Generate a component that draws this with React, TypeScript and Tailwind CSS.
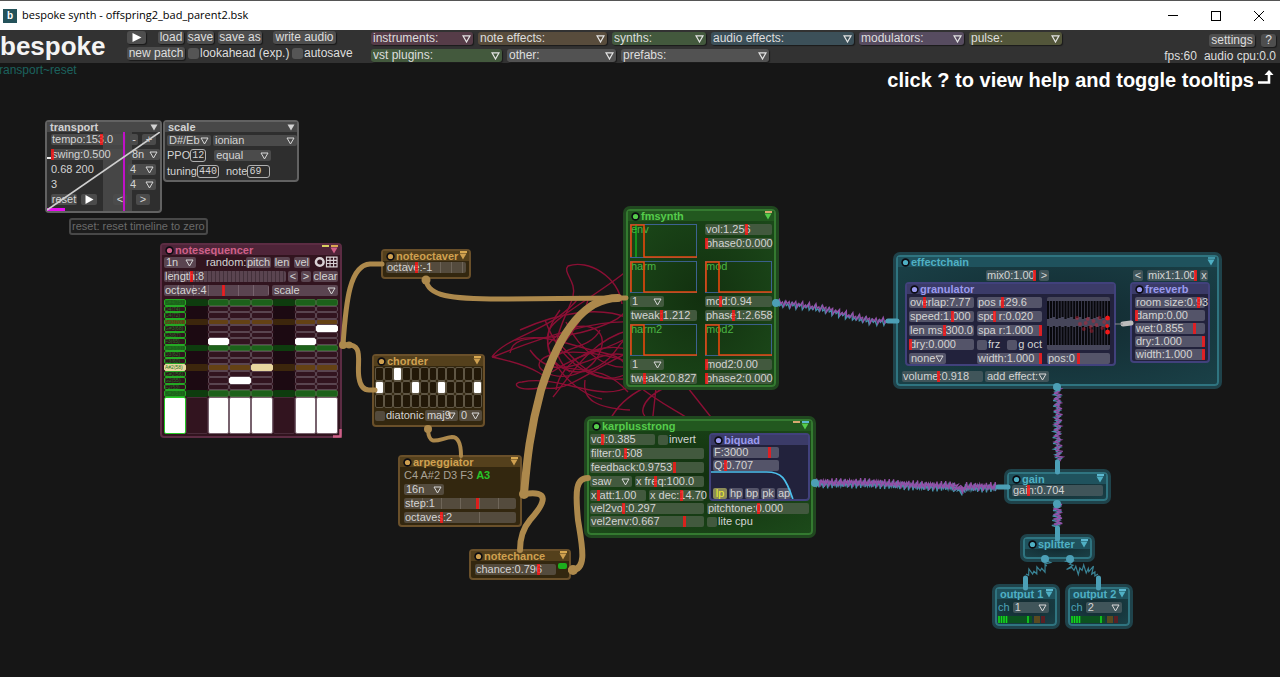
import React, { ReactNode } from "react";
import clsx from "clsx";

type Tone = "grey" | "magenta" | "brown" | "green" | "cyan" | "purple";

const frame: Record<Tone, string> = {
  grey: "border-2 border-[#626262] bg-[#2e2e2e]",
  magenta: "border-2 border-[#5c2c43] bg-[#32141f]",
  brown: "border-2 border-[#6a502a] bg-[#33270f]",
  green: "border-2 border-[#347a30] bg-radial from-[#12300f] to-[#1c4a1a] shadow-[0_0_0_3px_#20481f]",
  cyan: "border-2 border-[#2f7480] bg-radial from-[#12292f] to-[#1a4148] shadow-[0_0_0_3px_#1f434b]",
  purple: "border-2 border-[#41417c] bg-[#22223c]",
};

const bar: Record<Tone, string> = {
  grey: "bg-[#484848] text-[#d2d2d2]",
  magenta: "bg-[#4e2438] text-[#cf6088]",
  brown: "bg-[#54401c] text-[#cfa050]",
  green: "bg-[#22581f] text-[#55cc4b]",
  cyan: "bg-[#1f525d] text-[#4fb0c4]",
  purple: "bg-[#3b3b68] text-[#9a9aee]",
};

const fill: Record<Tone, string> = {
  grey: "bg-[#4b4b4b]",
  magenta: "bg-[#5a4450]",
  brown: "bg-[#544b3d]",
  green: "bg-[#42593e]",
  cyan: "bg-[#40555a]",
  purple: "bg-[#545469]",
};

function Module(props: {
  tone: Tone;
  title: string;
  place: string;
  body: string;
  dot?: boolean;
  menu?: boolean;
  flags?: string[];
  children?: ReactNode;
}) {
  const { tone, title, place, body, dot = true, menu = true, flags = [], children } = props;
  return (
    <section className={clsx("rounded-[4px]", frame[tone], place)}>
      <header className={clsx("flex h-2.5 items-center gap-px pr-0.5 pl-[3px] leading-[11px] font-bold", bar[tone])}>
        {dot && (
          <svg width="9" height="9" viewBox="0 0 9 9" className="shrink-0">
            <circle cx="4.5" cy="4.5" r="4.2" fill="#0c0c12" />
            <circle cx="4.5" cy="4.5" r="2.6" fill="currentColor" />
          </svg>
        )}
        <h2 className="flex-1 whitespace-nowrap">{title}</h2>
        {menu && (
          <span className="relative flex shrink-0">
            <svg width="8" height="7" viewBox="0 0 8 7">
              <path d="M0.5 0.5h7L4 6.5z" fill="currentColor" />
            </svg>
            {flags.length > 0 && (
              <span className="absolute right-0 bottom-full flex gap-0.5">
                {flags.map((f, i) => (
                  <span key={i} className={clsx("h-0.5 w-[7px]", f)} />
                ))}
              </span>
            )}
          </span>
        )}
      </header>
      <div className={clsx("relative", body)}>{children}</div>
    </section>
  );
}

function Slider(props: { tone: Tone; text: string; at?: number; className?: string; marks?: string }) {
  const { tone, text, at = 50, className = "w-full", marks } = props;
  return (
    <label className={clsx("relative block h-[11px] shrink-0 rounded-xs pl-px leading-[11px] whitespace-nowrap", fill[tone], marks, className)}>
      {text}
      <input
        type="range"
        min={0}
        max={100}
        defaultValue={at}
        className="absolute inset-0 h-[11px] w-full appearance-none bg-transparent [&::-webkit-slider-thumb]:h-[11px] [&::-webkit-slider-thumb]:w-[3px] [&::-webkit-slider-thumb]:appearance-none [&::-webkit-slider-thumb]:bg-[#ff1414]/80"
      />
    </label>
  );
}

function Pick(props: { tone: Tone; text: string; name: string; className: string }) {
  return (
    <span className={clsx("relative flex h-[11px] shrink-0 rounded-xs", fill[props.tone], props.className)}>
      <select aria-label={props.name} className="h-full w-full appearance-none pl-0.5 leading-[11px] outline-none">
        <option>{props.text}</option>
      </select>
      <svg width="9" height="8" viewBox="0 0 9 8" className="pointer-events-none absolute top-0.5 right-0.5">
        <path d="M1 1h7L4.5 7z" fill="none" stroke="#d8d8d8" />
      </svg>
    </span>
  );
}

function Key(props: { tone: Tone; children: ReactNode; className?: string; name?: string; active?: boolean }) {
  return (
    <button
      aria-label={props.name}
      aria-pressed={props.active}
      className={clsx(
        "flex h-[11px] shrink-0 items-center justify-center rounded-xs leading-[11px] whitespace-nowrap",
        props.active ? "bg-[#8c8c58] text-[#ecec30]" : fill[props.tone],
        props.className,
      )}
    >
      {props.children}
    </button>
  );
}

function Tick(props: { tone: Tone; children: ReactNode; className?: string }) {
  return (
    <label className={clsx("flex h-[11px] shrink-0 items-center gap-px leading-[11px] whitespace-nowrap", props.className)}>
      <input type="checkbox" className={clsx("size-2.5 appearance-none rounded-xs", fill[props.tone])} />
      {props.children}
    </label>
  );
}

function NumberBox(props: { label: string; value: string; className: string }) {
  return (
    <label className="flex items-center">
      {props.label}
      <input
        defaultValue={props.value}
        className={clsx("h-[13px] rounded-[3px] border border-[#b0b0b0] bg-transparent px-px font-['Liberation_Mono',monospace] text-[10px] leading-[11px]", props.className)}
      />
    </label>
  );
}

function Envelope({ label, playhead, className = "h-8" }: { label: string; playhead?: boolean; className?: string }) {
  return (
    <div className={clsx("relative", className)}>
      <span className="block pl-px leading-[11px] text-[#4cb443]">{label}</span>
      <svg viewBox="0 0 67 34" preserveAspectRatio="none" className="absolute inset-0 h-full w-full">
        <rect x="0.5" y="0.5" width="66" height="33" fill="none" stroke="#3d6292" />
        <path d="M1 33V1h13v32h53" fill="none" stroke="#e8480c" strokeWidth="1.6" />
        {playhead && <path d="M6 1v32" stroke="#10e020" />}
      </svg>
    </div>
  );
}

const barTone = {
  instruments: "bg-[#563c48]",
  notes: "bg-[#584c3c]",
  synths: "bg-[#43593d]",
  audio: "bg-[#3c5059]",
  mods: "bg-[#574c60]",
  pulse: "bg-[#53563a]",
  plain: "bg-[#525252]",
};

function MenuPick({ text, tone, className }: { text: string; tone: keyof typeof barTone; className: string }) {
  return (
    <span className={clsx("relative flex h-[13px] rounded-[3px] shadow-[1px_1px_1px_#1a1a1a]", barTone[tone], className)}>
      <select aria-label={text} className="h-full w-full appearance-none pl-0.5 leading-[13px] outline-none">
        <option>{text}</option>
      </select>
      <svg width="9" height="8" viewBox="0 0 9 8" className="pointer-events-none absolute top-[3px] right-0.5">
        <path d="M1 0.8h7L4.5 7z" fill="none" stroke="#e4e4e4" strokeWidth="1.2" />
      </svg>
    </span>
  );
}

function TopButton({ children, className, name }: { children: ReactNode; className?: string; name?: string }) {
  return (
    <button
      aria-label={name}
      className={clsx("flex h-[13px] items-center justify-center rounded-[3px] bg-[#4e4e4e] leading-[13px] whitespace-nowrap shadow-[1px_1px_1px_#1a1a1a]", className)}
    >
      {children}
    </button>
  );
}

function TopBar() {
  return (
    <header className="flex h-[33px] shrink-0 items-start bg-[#323232] text-xs text-[#dedede]">
      <h1 className="w-[127px] text-[26px] leading-[32px] font-bold text-[#f4f4f4]">bespoke</h1>
      <div className="flex w-[244px] flex-col gap-[3px] pt-px">
        <div className="flex">
          <TopButton name="play" className="mr-3 w-[19px]">
            <svg width="10" height="9" viewBox="0 0 10 9"><path d="M0.5 0v9L9.5 4.5z" fill="#fff" /></svg>
          </TopButton>
          <TopButton className="mr-[3px] w-[26px]">load</TopButton>
          <TopButton className="mr-1 w-[27px]">save</TopButton>
          <TopButton className="mr-[11px] w-11">save as</TopButton>
          <TopButton className="w-[63px]">write audio</TopButton>
        </div>
        <div className="flex leading-[13px] whitespace-nowrap">
          <TopButton className="mr-[3px] w-[58px]">new patch</TopButton>
          <label className="flex w-[104px] items-center gap-px">
            <input type="checkbox" className="size-[11px] shrink-0 appearance-none rounded-[3px] bg-[#555]" />
            lookahead (exp.)
          </label>
          <label className="flex items-center gap-px">
            <input type="checkbox" className="size-[11px] shrink-0 appearance-none rounded-[3px] bg-[#555]" />
            autosave
          </label>
        </div>
      </div>
      <div className="flex flex-col gap-1 pt-0.5">
        <div className="flex gap-[5px]">
          <MenuPick text="instruments:" tone="instruments" className="w-[102px]" />
          <MenuPick text="note effects:" tone="notes" className="w-[129px]" />
          <MenuPick text="synths:" tone="synths" className="w-[94px]" />
          <MenuPick text="audio effects:" tone="audio" className="w-[143px]" />
          <MenuPick text="modulators:" tone="mods" className="w-[105px]" />
          <MenuPick text="pulse:" tone="pulse" className="w-[93px]" />
        </div>
        <div className="flex gap-[5px]">
          <MenuPick text="vst plugins:" tone="synths" className="w-[131px]" />
          <MenuPick text="other:" tone="plain" className="w-[109px]" />
          <MenuPick text="prefabs:" tone="plain" className="w-[148px]" />
        </div>
      </div>
      <div className="ml-auto flex flex-col items-end gap-0.5 pt-1 pr-1">
        <div className="flex gap-1.5">
          <TopButton className="w-[46px]">settings</TopButton>
          <TopButton className="w-[15px]">?</TopButton>
        </div>
        <div className="flex gap-[7px] leading-[14px] whitespace-nowrap">
          <span>fps:60</span>
          <span>audio cpu:0.0</span>
        </div>
      </div>
    </header>
  );
}

function WindowBar() {
  return (
    <div className="flex h-[30px] shrink-0 items-center border-t border-[#555] bg-white text-black">
      <div className="ml-[3px] flex size-3.5 items-center justify-center bg-[#24525a] text-[10px] leading-none font-bold text-white">b</div>
      <span className="ml-[5px] flex-1 font-['Open_Sans',sans-serif] text-[11px]">bespoke synth - offspring2_bad_parent2.bsk</span>
      <button aria-label="minimize" className="flex w-[42px] justify-center">
        <svg width="10" height="10" viewBox="0 0 10 10"><path d="M0 4.5h10" stroke="#000" /></svg>
      </button>
      <button aria-label="maximize" className="flex w-[43px] justify-center">
        <svg width="10" height="10" viewBox="0 0 10 10"><rect x="0.5" y="0.5" width="9" height="9" fill="none" stroke="#000" /></svg>
      </button>
      <button aria-label="close" className="flex w-[43px] justify-center">
        <svg width="10" height="10" viewBox="0 0 10 10"><path d="M0 0l10 10M10 0L0 10" stroke="#000" /></svg>
      </button>
    </div>
  );
}

function Transport() {
  return (
    <Module tone="grey" title="transport" dot={false} place="absolute left-[45px] top-[57px] w-[117px]" body="flex flex-col gap-1 px-1 pt-0.5 pb-1.5">
      <svg viewBox="0 0 113 79" className="pointer-events-none absolute inset-0 h-full w-full" preserveAspectRatio="none">
        <rect x="56" width="29" height="79" fill="#464646" />
      </svg>
      <div className="relative flex items-center gap-1">
        <Slider tone="grey" text="tempo:153.0" at={68} className="w-[75px]" />
        <Key tone="grey" className="w-2">-</Key>
        <Key tone="grey" className="w-3.5">+</Key>
      </div>
      <div className="relative flex items-center gap-1">
        <Slider tone="grey" text="swing:0.500" at={0} className="w-[75px]" />
        <Pick tone="grey" name="swing interval" text="8n" className="w-[30px]" />
      </div>
      <div className="relative flex items-center justify-between leading-[11px]">
        <span>0.68 200</span>
        <Pick tone="grey" name="time signature top" text="4" className="w-7" />
      </div>
      <div className="relative flex items-center justify-between leading-[11px]">
        <span>3</span>
        <Pick tone="grey" name="time signature bottom" text="4" className="w-7" />
      </div>
      <div className="relative flex items-center">
        <Key tone="grey" className="mr-1 w-[26px]">reset</Key>
        <Key tone="grey" name="play" className="mr-4 w-4">
          <svg width="9" height="9" viewBox="0 0 9 9"><path d="M0.5 0v9L8.5 4.5z" fill="#fff" /></svg>
        </Key>
        <Key tone="grey" className="mr-[9px] w-3.5">&lt;</Key>
        <Key tone="grey" className="w-3.5">&gt;</Key>
      </div>
      <svg viewBox="0 0 113 79" className="pointer-events-none absolute inset-0 h-full w-full" preserveAspectRatio="none">
        <path d="M77 0v79" stroke="#c010c8" strokeWidth="2" />
        <rect y="76" width="18" height="3" fill="#e80cf0" />
        <path d="M0 78L113 0" stroke="#cfcfcf" strokeWidth="1.6" />
        <path d="M0 26h4" stroke="#eee" strokeWidth="2" />
      </svg>
    </Module>
  );
}

function Scale() {
  return (
    <Module tone="grey" title="scale" dot={false} place="absolute left-[163px] top-[57px] w-[136px]" body="flex flex-col gap-[3px] px-0.5 pt-[3px] pb-0.5">
      <div className="flex gap-0.5">
        <Pick tone="grey" name="root" text="D#/Eb" className="w-[44px]" />
        <Pick tone="grey" name="scale" text="ionian" className="w-[84px]" />
      </div>
      <div className="flex h-[13px] items-center gap-2">
        <NumberBox label="PPO" value="12" className="w-4" />
        <Pick tone="grey" name="intonation" text="equal" className="w-[57px]" />
      </div>
      <div className="flex h-[13px] items-center gap-[7px]">
        <NumberBox label="tuning" value="440" className="w-[22px]" />
        <NumberBox label="note" value="69" className="w-[23px]" />
      </div>
    </Module>
  );
}

const pitches = ["D#4(75)", "D4(74)", "C4(72)", "A#3(70)", "G#3(68)", "G3(67)", "F3(65)", "D#3(63)", "D3(62)", "C3(60)", "A#2(58)", "G#2(56)", "G2(55)", "F2(53)", "D#2(51)"];
const litNotes = ["4-7", "6-2", "6-6", "12-3"];
const paleNotes = ["10-0", "10-4"];
const restSteps = [1, 5];

function noteColor(row: number, col: number) {
  const key = `${row}-${col}`;
  if (litNotes.includes(key)) return "bg-white border-white";
  if (paleNotes.includes(key)) return "bg-[#e8d6a0] border-[#e8d6a0]";
  const rest = restSteps.includes(col);
  const edge = col === 0 ? "border-[#24a824]" : rest ? "border-transparent" : row % 7 === 0 ? "border-[#3a6a34]" : "border-[#5a4550]";
  if (row % 7 === 0) return clsx(rest ? "bg-[#0e3c0e]" : "bg-[#1c611a]", edge);
  if (row % 7 === 3) return clsx(rest ? "bg-[#3c260c]" : "bg-[#644114]", edge);
  return clsx(rest ? "bg-[#1c0a12]" : "bg-[#32141f]", edge);
}

function NoteSequencer() {
  return (
    <Module tone="magenta" title="notesequencer" flags={["bg-[#d8d060]", "bg-[#d8a850]"]} place="absolute left-[160px] top-[180px] w-[182px]" body="px-0.5 pb-0.5">
      <div className="flex h-3.5 items-center">
        <Pick tone="magenta" name="interval" text="1n" className="mr-2.5 w-8" />
        <span className="w-[40px]">random:</span>
        <Key tone="magenta" className="mr-[3px] w-[25px]">pitch</Key>
        <Key tone="magenta" className="mr-1 w-4">len</Key>
        <Key tone="magenta" className="mr-1 w-4">vel</Key>
        <svg width="25" height="12" viewBox="0 0 25 12">
          <circle cx="6" cy="6" r="4" fill="none" stroke="#d8d0d4" strokeWidth="2.6" />
          <path d="M13 1h11v10H13zM13 4.3h11M13 7.6h11M16.7 1v10M20.4 1v10" fill="none" stroke="#d8d0d4" strokeWidth="1.2" />
        </svg>
      </div>
      <div className="flex h-3.5 items-center">
        <Slider tone="magenta" text="length:8" at={22} className="mr-0.5 w-[122px]" marks="bg-[repeating-linear-gradient(90deg,transparent_0_3px,#43303a_3px_4px)]" />
        <Key tone="magenta" className="mr-[3px] w-2.5">&lt;</Key>
        <Key tone="magenta" className="mr-0.5 w-2.5">&gt;</Key>
        <Key tone="magenta" className="w-[25px]">clear</Key>
      </div>
      <div className="flex h-3.5 items-center gap-[3px]">
        <Slider tone="magenta" text="octave:4" at={57} className="w-[105px]" marks="bg-[repeating-linear-gradient(90deg,transparent_0_14px,#77626d_14px_15px)]" />
        <Pick tone="magenta" name="note mode" text="scale" className="w-[66px]" />
      </div>
      <div className="mt-0.5 grid h-[98px] grid-cols-8 grid-rows-15">
        {pitches.map((p, row) =>
          Array.from({ length: 8 }, (_, col) => (
            <div key={`${row}-${col}`} className={clsx("overflow-hidden rounded-xs border text-[5px] leading-[5px] text-[#1f7a1f]", noteColor(row, col))}>
              {col === 0 && p}
            </div>
          )),
        )}
      </div>
      <div className="grid h-[37px] grid-cols-8">
        {Array.from({ length: 8 }, (_, col) => (
          <div
            key={col}
            className={clsx("rounded-xs border", restSteps.includes(col) ? "border-[#4a2c3a] bg-[#32141f]" : col === 0 ? "border-[#24c824] bg-white" : "border-[#77626d] bg-white")}
          />
        ))}
      </div>
      <svg width="9" height="9" viewBox="0 0 9 9" className="absolute -right-0.5 -bottom-0.5">
        <path d="M7.5 0v7.5H0" fill="none" stroke="#cf6088" strokeWidth="2.4" />
      </svg>
    </Module>
  );
}

function Chorder() {
  const on = ["0-2", "1-0", "1-4", "1-7", "1-11"];
  return (
    <Module tone="brown" title="chorder" flags={["bg-[#d8a850]"]} place="absolute left-[372px] top-[291px] w-[113px]" body="px-px pt-px pb-1">
      <div className="grid h-[41px] w-[107px] grid-cols-12 grid-rows-3">
        {[0, 1, 2].map((r) =>
          Array.from({ length: 12 }, (_, c) => (
            <div key={`${r}-${c}`} className={clsx("rounded-xs border border-[#5f5644]", on.includes(`${r}-${c}`) ? "bg-white" : "bg-[#221808]")} />
          )),
        )}
      </div>
      <div className="mt-0.5 flex justify-between">
        <Tick tone="brown">diatonic</Tick>
        <Pick tone="brown" name="chord" text="maj9" className="w-[33px]" />
        <Pick tone="brown" name="inversion" text="0" className="w-[23px]" />
      </div>
    </Module>
  );
}

function FmSynth() {
  return (
    <Module tone="green" title="fmsynth" flags={["bg-[#d8a870]"]} place="absolute left-[626px] top-[146px] w-[150px]" body="grid grid-cols-2 gap-x-2 px-0.5 pt-[3px] pb-px">
      <Envelope label="env" playhead className="h-[34px]" />
      <div className="flex flex-col gap-[3px]">
        <Slider tone="green" text="vol:1.256" at={63} />
        <Slider tone="green" text="phase0:0.000" at={0} />
      </div>
      <div className="flex flex-col gap-[3px] pt-[3px]">
        <Envelope label="harm" />
        <Pick tone="green" name="harmonic ratio" text="1" className="w-[34px]" />
        <Slider tone="green" text="tweak:1.212" at={47} />
      </div>
      <div className="flex flex-col gap-[3px] pt-[3px]">
        <Envelope label="mod" />
        <Slider tone="green" text="mod:0.94" at={22} />
        <Slider tone="green" text="phase1:2.658" at={42} />
      </div>
      <div className="flex flex-col gap-[3px] pt-[3px]">
        <Envelope label="harm2" />
        <Pick tone="green" name="second harmonic ratio" text="1" className="w-[34px]" />
        <Slider tone="green" text="tweak2:0.827" at={21} />
      </div>
      <div className="flex flex-col gap-[3px] pt-[3px]">
        <Envelope label="mod2" />
        <Slider tone="green" text="mod2:0.00" at={0} />
        <Slider tone="green" text="phase2:0.000" at={0} />
      </div>
    </Module>
  );
}

function Karplus() {
  return (
    <Module tone="green" title="karplusstrong" flags={["bg-[#d8a870]", "bg-[#5cb8d0]"]} place="absolute left-[587px] top-[356px] w-[226px]" body="px-px pt-0.5 pb-1.5">
      <div className="flex items-start justify-between">
        <div className="flex w-[114px] flex-col gap-[3px] pt-px">
          <div className="flex gap-[3px]">
            <Slider tone="green" text="vol:0.385" at={18} className="w-[65px]" />
            <Tick tone="green">invert</Tick>
          </div>
          <Slider tone="green" text="filter:0.508" at={31} />
          <Slider tone="green" text="feedback:0.9753" at={75} />
          <div className="flex justify-between">
            <Pick tone="green" name="source" text="saw" className="w-[42px]" />
            <Slider tone="green" text="x freq:100.0" at={29} className="w-[69px]" />
          </div>
          <div className="flex justify-between">
            <Slider tone="green" text="x att:1.00" at={14} className="w-14" />
            <Slider tone="green" text="x dec:14.70" at={60} className="w-[55px]" />
          </div>
        </div>
        <Module tone="purple" title="biquad" menu={false} place="w-[101px]" body="h-[54px] px-0.5 pt-0.5">
          <div className="flex flex-col gap-0.5">
            <Slider tone="purple" text="F:3000" at={87} className="w-[66px]" />
            <Slider tone="purple" text="Q:0.707" at={18} className="w-[66px]" />
          </div>
          <div className="mt-[17px] flex gap-0.5">
            <Key tone="purple" active className="w-3.5">lp</Key>
            <Key tone="purple" className="w-3.5">hp</Key>
            <Key tone="purple" className="w-3.5">bp</Key>
            <Key tone="purple" className="w-3.5">pk</Key>
            <Key tone="purple" className="w-3.5">ap</Key>
          </div>
          <svg viewBox="0 0 96 54" preserveAspectRatio="none" className="pointer-events-none absolute inset-0 h-full w-full">
            <path d="M0 27h55C70 27 74 33 81 54" fill="none" stroke="#4cc0ec" strokeWidth="1.7" />
          </svg>
        </Module>
      </div>
      <div className="mt-0.5 grid grid-cols-[114px_102px] gap-x-[3px] gap-y-0.5">
        <Slider tone="green" text="vel2vol:0.297" at={29} />
        <Slider tone="green" text="pitchtone:0.000" at={50} />
        <Slider tone="green" text="vel2env:0.667" at={84} />
        <Tick tone="green">lite cpu</Tick>
      </div>
    </Module>
  );
}

function EffectChain() {
  return (
    <Module tone="cyan" title="effectchain" flags={["bg-[#3f94a6]"]} place="absolute left-[896px] top-[192px] w-[323px]" body="px-1 pt-px pb-0.5">
      <div className="flex h-3.5 items-center pl-[84px]">
        <Slider tone="cyan" text="mix0:1.00" at={100} className="mr-[3px] w-[50px]" />
        <Key tone="cyan" className="mr-[84px] w-2.5">&gt;</Key>
        <Key tone="cyan" className="mr-1 w-2.5">&lt;</Key>
        <Slider tone="cyan" text="mix1:1.00" at={100} className="mr-[3px] w-[50px]" />
        <Key tone="cyan" className="w-2">x</Key>
      </div>
      <div className="flex items-start gap-3.5 pl-[3px]">
        <Module tone="purple" title="granulator" menu={false} place="w-[211px]" body="grid grid-cols-[65px_65px_65px] gap-x-[3px] px-0.5 pt-[3px]">
          <div className="flex flex-col gap-[3px]">
            <Slider tone="purple" text="overlap:7.77" at={23} />
            <Slider tone="purple" text="speed:1.000" at={67} />
            <Slider tone="purple" text="len ms:300.0" at={55} />
            <Slider tone="purple" text="dry:0.000" at={0} />
            <Pick tone="purple" name="autocapture" text="none" className="w-[37px]" />
          </div>
          <div className="flex flex-col gap-[3px]">
            <Slider tone="purple" text="pos r:29.6" at={38} />
            <Slider tone="purple" text="spd r:0.020" at={25} />
            <Slider tone="purple" text="spa r:1.000" at={100} />
            <div className="flex justify-between">
              <Tick tone="purple">frz</Tick>
              <Tick tone="purple">g oct</Tick>
            </div>
            <Slider tone="purple" text="width:1.000" at={100} />
          </div>
          <div className="ml-0.5 flex flex-col gap-[3px]">
            <GrainView />
            <Slider tone="purple" text="pos:0" at={50} />
          </div>
        </Module>
        <Module tone="purple" title="freeverb" menu={false} place="w-20" body="flex flex-col gap-0.5 px-[3px] pt-[3px] pb-px">
          <Slider tone="purple" text="room size:0.93" at={93} />
          <Slider tone="purple" text="damp:0.00" at={0} />
          <Slider tone="purple" text="wet:0.855" at={86} />
          <Slider tone="purple" text="dry:1.000" at={100} />
          <Slider tone="purple" text="width:1.000" at={100} />
        </Module>
      </div>
      <div className="mt-[5px] flex gap-0.5">
        <Slider tone="cyan" text="volume:0.918" at={45} className="w-[81px]" />
        <Pick tone="cyan" name="add effect" text="add effect:" className="w-16" />
      </div>
    </Module>
  );
}

function GrainView() {
  return (
    <svg viewBox="0 0 65 53" preserveAspectRatio="none" className="h-[53px] w-full">
      <rect width="65" height="53" rx="2" fill="#46465a" />
      {Array.from({ length: 22 }, (_, i) => (
        <g key={i} fill="#08080c">
          <rect x={i * 3} y="4" width="2.2" height={18 - (i % 3)} />
          <rect x={i * 3} y={29 + (i % 2)} width="2.2" height={19 - (i % 2)} />
        </g>
      ))}
      <g fill="#d82030" opacity="0.4">
        {[[31, 21], [34, 27], [38, 32], [42, 22], [45, 30], [48, 24], [51, 28], [54, 21], [57, 31], [59, 25], [40, 26], [46, 34]].map(([x, y]) => (
          <circle key={`${x}-${y}`} cx={x} cy={y} r="2" />
        ))}
      </g>
      <g fill="#f01818">
        <circle cx="62.5" cy="21" r="2.5" />
        <circle cx="62" cy="29" r="2" />
        <circle cx="62.5" cy="35" r="2.5" />
      </g>
    </svg>
  );
}

function Output({ n, place }: { n: string; place: string }) {
  return (
    <Module tone="cyan" title={`output ${n}`} dot={false} flags={["bg-[#5cb8d0]"]} place={place} body="px-px pt-[3px] pb-px">
      <div className="flex items-center gap-[3px] leading-[11px]">
        <span className="text-[#4fa4b8]">ch</span>
        <Pick tone="cyan" name="channel" text={n} className="w-9" />
      </div>
      <svg viewBox="0 0 48 7" className="mt-[3px] h-[7px] w-12">
        <rect width="34" height="7" fill="#0c5220" />
        <rect x="36" width="6" height="7" fill="#5a4a20" />
        <rect x="43" width="4" height="7" fill="#5a2024" />
        <path d="M1 0v7M3.5 0v7M6 0v7M8.500 0v7M30 0v7" stroke="#14d820" strokeWidth="1.6" />
      </svg>
    </Module>
  );
}

type Point = [number, number];

// Traces a waveform along a polyline; `swing` is the amplitude in pixels.
function signal(points: Point[], swing: number, step: number, phase: number) {
  const out: string[] = [];
  let n = 0;
  for (let s = 0; s < points.length - 1; s++) {
    const [x0, y0] = points[s];
    const [x1, y1] = points[s + 1];
    const len = Math.hypot(x1 - x0, y1 - y0);
    const count = Math.max(1, Math.round(len / step));
    for (let i = 0; i < count; i++) {
      const t = i / count;
      const side = n % 2 === 0 ? 1 : -1;
      const amp = swing * side * (0.55 + 0.45 * Math.sin(n * 1.7 + phase));
      const x = x0 + (x1 - x0) * t - ((y1 - y0) / len) * amp;
      const y = y0 + (y1 - y0) * t + ((x1 - x0) / len) * amp;
      out.push(`${out.length ? "L" : "M"}${x.toFixed(1)} ${y.toFixed(1)}`);
      n++;
    }
  }
  const last = points[points.length - 1];
  return `${out.join("")}L${last[0]} ${last[1]}`;
}

function Signal({ points, swing, step }: { points: Point[]; swing: number; step: number }) {
  return (
    <g fill="none" strokeWidth="1.3">
      <path d={signal(points, swing, step, 0)} stroke="#4592ac" transform="translate(-0.5 1)" />
      <path d={signal(points, swing, step, 0.6)} stroke="#9450a8" transform="translate(0.5 -0.5)" />
    </g>
  );
}

function Modulation() {
  return (
    <svg width="1280" height="614" viewBox="0 63 1280 614" className="pointer-events-none absolute top-0 left-0">
      <g fill="none" stroke="#8a0f34" strokeWidth="1.4">
        <path d="M573 296C577 282 562 272 568 266C588 259 618 276 622 304" />
        <path d="M628 270C596 296 556 316 549 330C540 356 574 394 602 399" />
        <path d="M510 353C514 330 548 344 590 330S620 312 630 308" />
        <path d="M492 357C506 336 556 330 580 296" />
        <path d="M492 357C530 365 562 380 540 388C514 392 512 382 522 382C560 374 600 404 630 386" />
        <path d="M515 340C546 332 570 346 600 352S622 366 630 370" />
        <path d="M553 397C570 376 590 340 630 330" />
        <path d="M560 310C530 350 560 380 590 370S620 330 630 344" />
        <path d="M548 345C566 320 606 320 602 345S566 384 545 372S560 340 630 362" />
        <path d="M545 320C560 360 590 385 630 378M572 300C560 330 545 350 570 372" />
        <path d="M585 380C582 400 596 408 630 410M630 350C600 340 560 360 556 390" />
        <path d="M610 420C620 400 640 390 644 388M664 388C640 400 636 418 654 420M656 388L652 425M636 384C660 404 680 412 690 420M688 388L714 421" />
        <path d="M520 330C560 312 600 306 628 318M530 350C560 392 596 344 628 356" />
        <path d="M600 330C590 350 560 346 552 362C570 376 600 360 628 392" />
        <path d="M493 357C530 342 590 320 628 322M566 322C580 352 610 372 630 366" />
        <path d="M552 372C580 352 606 352 630 336M556 340C580 366 600 390 630 372" />
        <path d="M545 388C570 392 596 366 630 352M588 300C580 330 556 350 546 366" />
      </g>
    </svg>
  );
}

function Cables() {
  return (
    <svg width="1280" height="614" viewBox="0 63 1280 614" className="pointer-events-none absolute top-0 left-0">
      <g fill="none" stroke="#ad894c" strokeLinecap="round">
        <path d="M343 345C346 300 350 265 370 264H382" strokeWidth="5" />
        <path d="M343 345C366 342 356 362 359 378Q361 390 369 390H375" strokeWidth="5" />
        <path d="M426 280C428 296 450 299 500 299C545 299 580 298 626 298" strokeWidth="5" />
        <path d="M428 430C429 448 440 438 452 437Q461 437 461 456" strokeWidth="4" />
        <path d="M618 298C585 298 560 330 541 390C530 430 527 460 524 494" strokeWidth="8" />
        <path d="M524 494C550 490 546 502 530 520Q520 532 520 550" strokeWidth="6" />
        <path d="M571 570C588 571 582 545 578 520C575 490 576 478 588 478" strokeWidth="6" />
      </g>
      <g fill="#ad894c">
        <circle cx="343" cy="345" r="4" />
        <circle cx="349" cy="345" r="3.500" />
        <circle cx="426" cy="280" r="4.500" />
        <circle cx="428" cy="429" r="4" />
        <circle cx="524" cy="494" r="5" />
        <circle cx="573" cy="570" r="5" />
      </g>
      <rect x="558" y="563" width="9" height="6" rx="2" fill="#1cae1c" />
      <Signal points={[[777, 303], [800, 305], [825, 309], [850, 316], [872, 321], [888, 321]]} swing={3.4} step={1.7} />
      <Signal points={[[815, 483], [870, 483], [930, 486], [955, 486], [960, 491], [965, 487], [998, 487]]} swing={4.4} step={1.1} />
      <Signal points={[[1057, 388], [1058, 415], [1057, 435], [1059, 462]]} swing={4} step={1.4} />
      <Signal points={[[1057, 504], [1058, 516], [1057, 526]]} swing={5} step={1.3} />
      <path d="M1123 324L1131 323" stroke="#bcbcbc" strokeWidth="5" strokeLinecap="round" />
      <path d="M1115 324h8" stroke="#8a8a90" />
      <g fill="none" stroke="#3a8496" strokeWidth="1.2">
        <path d={signal([[1047, 560], [1046, 568], [1036, 571], [1026, 574]], 4, 2, 0)} />
        <path d={signal([[1069, 560], [1072, 570], [1088, 569], [1098, 574]], 5, 2, 1)} />
      </g>
      <g stroke="#4c9fb6" strokeWidth="5" strokeLinecap="round">
        <path d="M888 321h9M998 487h10M1057.500 462v10M1057.500 528v11M1025.500 578v10M1098.500 578v10" />
      </g>
      <g fill="#4c9fb6">
        <circle cx="776" cy="303" r="4" />
        <circle cx="815" cy="483" r="4" />
        <circle cx="1057" cy="387" r="4" />
        <circle cx="1057" cy="504" r="4" />
        <circle cx="1045" cy="559" r="4" />
        <circle cx="1070" cy="559" r="4" />
      </g>
    </svg>
  );
}

export default function App() {
  return (
    <div className="flex min-h-screen flex-col bg-[#161616] font-['Liberation_Sans',Arial,sans-serif]">
      <WindowBar />
      <TopBar />
      <main className="relative min-h-[613px] flex-1 overflow-hidden text-[11px] text-[#d4d4d4]">
        <div className="flex items-start justify-between">
          <span className="-ml-px text-xs leading-[14px] text-[#1c625e]">ransport~reset</span>
          <p className="flex items-center gap-1 pt-[5px] pr-1.5 text-[20px] leading-6 font-bold text-white">
            click ? to view help and toggle tooltips
            <svg width="16" height="17" viewBox="0 0 16 17" className="-mt-1.5">
              <path d="M0 13.500h11V5" fill="none" stroke="#fff" strokeWidth="2.600" />
              <path d="M6.500 6L11 1l4.500 5z" fill="#fff" />
            </svg>
          </p>
        </div>
        <Modulation />
        <Transport />
        <Scale />
        <div className="absolute top-[155px] left-[69px] rounded-[3px] border-2 border-[#484848] bg-[#1c1c1c] px-px leading-[13px] whitespace-nowrap text-[#6a6a6a]">
          reset: reset timeline to zero
        </div>
        <NoteSequencer />
        <Module tone="brown" title="noteoctaver" flags={["bg-[#d8a850]"]} place="absolute left-[381px] top-[186px] w-[90px]" body="px-[3px] pt-px pb-1">
          <Slider tone="brown" text="octave:-1" at={38} marks="bg-[repeating-linear-gradient(90deg,transparent_0_10px,#6e6558_10px_11px)]" />
        </Module>
        <Chorder />
        <Module tone="brown" title="arpeggiator" flags={["bg-[#d8a850]"]} place="absolute left-[398px] top-[392px] w-[124px]" body="flex flex-col gap-[3px] px-1 pt-[3px] pb-0.5">
          <p className="leading-[11px] text-[#a8a296]">
            C4 A#2 D3 F3 <span className="font-bold text-[#28c428]">A3</span>
          </p>
          <Pick tone="brown" name="interval" text="16n" className="w-10" />
          <Slider tone="brown" text="step:1" at={66} marks="bg-[repeating-linear-gradient(90deg,transparent_0_18px,#6e6558_18px_19px)]" />
          <Slider tone="brown" text="octaves:2" at={33} marks="bg-[repeating-linear-gradient(90deg,transparent_0_37px,#6e6558_37px_38px)]" />
        </Module>
        <Module tone="brown" title="notechance" flags={["bg-[#d8a850]"]} place="absolute left-[469px] top-[486px] w-[102px]" body="px-1 pt-[3px] pb-[3px]">
          <Slider tone="brown" text="chance:0.796" at={80} className="w-[81px]" />
        </Module>
        <FmSynth />
        <Karplus />
        <EffectChain />
        <Module tone="cyan" title="gain" flags={["bg-[#5cb8d0]"]} place="absolute left-[1007px] top-[409px] w-[101px]" body="px-[3px] pt-px pb-[3px]">
          <Slider tone="cyan" text="gain:0.704" at={17} />
        </Module>
        <Module tone="cyan" title="splitter" flags={["bg-[#5cb8d0]"]} place="absolute left-[1023px] top-[474px] w-[69px]" body="h-2" />
        <Output n="1" place="absolute left-[995px] top-[524px] w-[62px]" />
        <Output n="2" place="absolute left-[1068px] top-[524px] w-[62px]" />
        <Cables />
      </main>
    </div>
  );
}
